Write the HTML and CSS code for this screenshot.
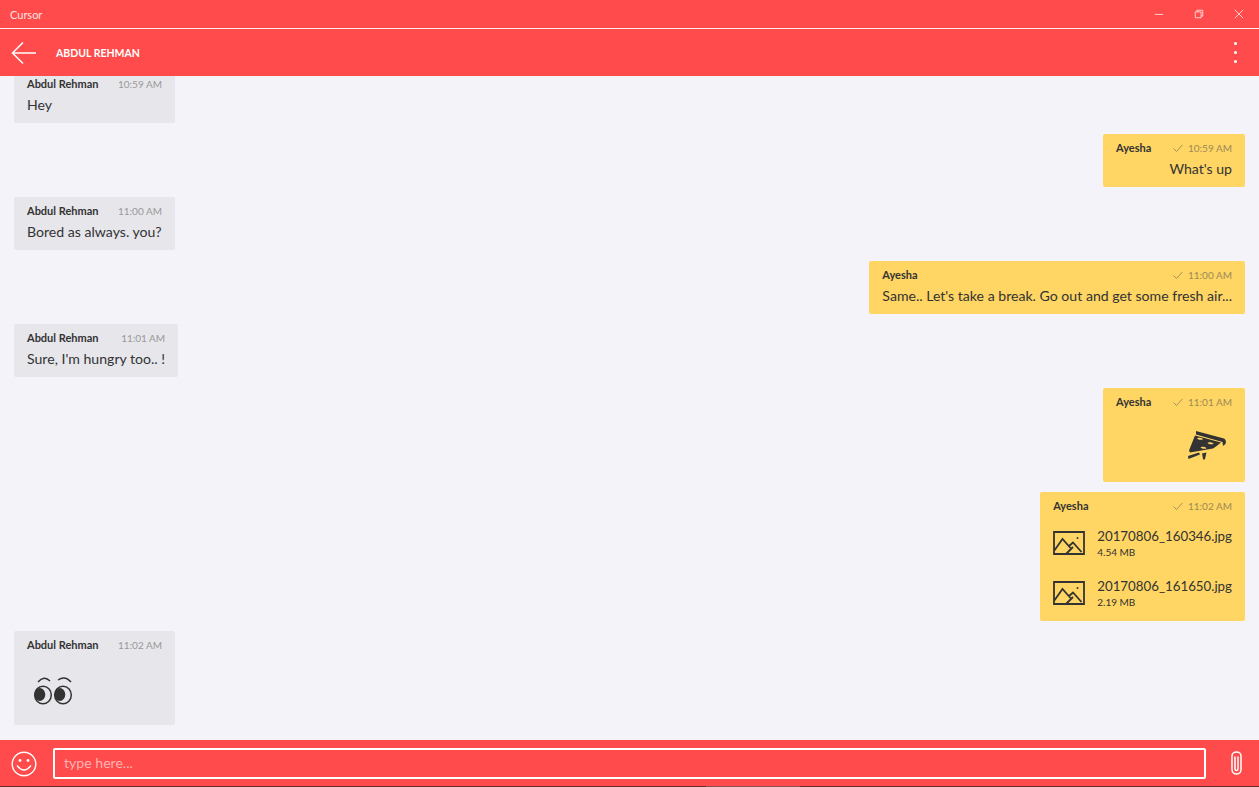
FILE: index.html
```html
<!DOCTYPE html>
<html lang="en">
<head>
  <meta charset="UTF-8">
  <title>Cursor</title>
  <link rel="stylesheet" href="styles.css">
</head>
<body>
  <div class="app">
    <div class="titlebar">
      <span class="app-name">Cursor</span>
      <div class="win-btns">
        <svg class="win-btn" viewBox="0 0 12 12"><path d="M1 6.5h10"/></svg>
        <svg class="win-btn" viewBox="0 0 12 12"><path d="M1.5 3.5h7v7h-7zM3.5 3.5v-2h7v7h-2"/></svg>
        <svg class="win-btn" viewBox="0 0 12 12"><path d="M1 1l10 10M11 1L1 11"/></svg>
      </div>
    </div>

    <header class="chat-header">
      <svg class="back-icon" viewBox="0 0 26 24"><path d="M25 12H1.5M12 1.5L1.5 12 12 22.5"/></svg>
      <span class="contact">ABDUL REHMAN</span>
      <div class="more"><i></i><i></i><i></i></div>
    </header>

    <main class="messages">
      <div class="msg in">
        <div class="msg-head"><b>Abdul Rehman</b><span class="time">10:59 AM</span></div>
        <div class="msg-text">Hey</div>
      </div>
      <div class="msg out">
        <div class="msg-head"><b>Ayesha</b><span class="time"><svg class="tick" viewBox="0 0 10 8"><path d="M.5 4.5L3.5 7.5 9.5.8"/></svg>10:59 AM</span></div>
        <div class="msg-text">What's up</div>
      </div>
      <div class="msg in">
        <div class="msg-head"><b>Abdul Rehman</b><span class="time">11:00 AM</span></div>
        <div class="msg-text">Bored as always. you?</div>
      </div>
      <div class="msg out">
        <div class="msg-head"><b>Ayesha</b><span class="time"><svg class="tick" viewBox="0 0 10 8"><path d="M.5 4.5L3.5 7.5 9.5.8"/></svg>11:00 AM</span></div>
        <div class="msg-text">Same.. Let's take a break. Go out and get some fresh air...</div>
      </div>
      <div class="msg in">
        <div class="msg-head"><b>Abdul Rehman</b><span class="time">11:01 AM</span></div>
        <div class="msg-text">Sure, I'm hungry too.. !</div>
      </div>
      <div class="msg out sticker-msg">
        <div class="msg-head"><b>Ayesha</b><span class="time"><svg class="tick" viewBox="0 0 10 8"><path d="M.5 4.5L3.5 7.5 9.5.8"/></svg>11:01 AM</span></div>
        <svg class="pizza" viewBox="0 0 40 30">
          <path class="fill" d="M9 0L37 7.500Q39.800 9 38.500 13L36 15 35.500 11 9 3.500z"/>
          <path class="fill" fill-rule="evenodd" d="M8 4.500L34 11.500 29 15.500 26 17.500 3 21.500 2 19.500zM10 7.500c1-1.500 5-.8 6 .5-1 1.500-5 .8-6-.5zM20.500 12c1-1.500 5-.8 6 .5-1 1.500-5 .8-6-.5zM13.500 16.500c1-1.500 5-.8 6 .5-1 1.500-5 .8-6-.5z"/>
          <path class="fill" d="M1 25L12 21.500 13 23.500 1.500 28zM15 22.500L19.500 21.500 18 28Q16.500 29.500 16 28z"/>
        </svg>
      </div>
      <div class="msg out files-msg">
        <div class="msg-head"><b>Ayesha</b><span class="time"><svg class="tick" viewBox="0 0 10 8"><path d="M.5 4.500L3.500 7.500 9.500.8"/></svg>11:02 AM</span></div>
        <div class="file">
          <svg class="file-icon" viewBox="0 0 32 24"><path d="M1 1h30v22H1zM1 20L9.500 8l8 9M16 15l4-3.500 8.500 9.500M13 23l7-7"/><circle class="fill" cx="24.500" cy="7" r="1"/></svg>
          <div class="file-info"><div class="file-name">20170806_160346.jpg</div><div class="file-size">4.54 MB</div></div>
        </div>
        <div class="file">
          <svg class="file-icon" viewBox="0 0 32 24"><path d="M1 1h30v22H1zM1 20L9.500 8l8 9M16 15l4-3.500 8.500 9.500M13 23l7-7"/><circle class="fill" cx="24.500" cy="7" r="1"/></svg>
          <div class="file-info"><div class="file-name">20170806_161650.jpg</div><div class="file-size">2.19 MB</div></div>
        </div>
      </div>
      <div class="msg in sticker-msg">
        <div class="msg-head"><b>Abdul Rehman</b><span class="time">11:02 AM</span></div>
        <svg class="eyes" viewBox="0 0 40 30">
          <ellipse class="eye" cx="10" cy="19" rx="8.300" ry="8.800"/>
          <ellipse class="eye" cx="30" cy="19" rx="8.300" ry="8.800"/>
          <ellipse class="fill" cx="6.800" cy="18.500" rx="5.500" ry="6.500"/>
          <ellipse class="fill" cx="26.800" cy="18.500" rx="5.500" ry="6.500"/>
          <path class="brow" d="M5 6Q11-1 17 5M25 4Q32-1 38 6"/>
        </svg>
      </div>
    </main>

    <footer class="composer">
      <svg class="smile" viewBox="0 0 26 26"><circle cx="13" cy="13" r="11.800"/><path d="M6 14.500Q13 23.500 20 14.500"/><circle class="dot" cx="9" cy="9.500" r="1.400"/><circle class="dot" cx="17" cy="9.500" r="1.400"/></svg>
      <div class="input">type here...</div>
      <svg class="clip" viewBox="0 0 11 24"><path d="M1 6V18.500a4.500 4.500 0 0 0 9 0V5a4.500 4 0 0 0-9 0v1M4 5.500V18a1.500 1.500 0 0 0 3 0V5.500"/></svg>
    </footer>
    <div class="bottom-edge"></div>
  </div>
</body>
</html>
```

FILE: styles.css
```css
html, body { margin: 0; height: 100%; }
body { font-family: Lato, "Open Sans", Arial, sans-serif; color: #333; background: #f3f3f9; overflow: hidden; }
.app { height: 787px; display: flex; flex-direction: column; }

.titlebar { height: 28px; flex: none; background: #ff4b4b; border-bottom: 1px solid #ffe9e9; display: flex; align-items: center; justify-content: space-between; color: #ffe3e3; }
.app-name { font-size: 11px; margin-left: 10px; }
.win-btns { display: flex; gap: 30px; margin-right: 15px; }
.win-btn { width: 10px; height: 10px; fill: none; stroke: #ffdcdc; stroke-width: 1.1; }

.chat-header { height: 47px; flex: none; background: #ff4b4b; display: flex; align-items: center; }
.back-icon { width: 26px; height: 24px; margin-left: 11px; fill: none; stroke: #fff; stroke-width: 1.5; }
.contact { margin-left: 19px; font-size: 10.500px; font-weight: 700; color: #fff; }
.more { margin-left: auto; margin-right: 22px; display: flex; flex-direction: column; gap: 6px; }
.more i { width: 3px; height: 3px; border-radius: 50%; background: #fff; }

.messages { flex: 1; min-height: 0; overflow: hidden; display: flex; flex-direction: column; justify-content: flex-end; gap: 10.5px; padding: 0 14px 15px; }
.msg { flex: none; box-sizing: border-box; padding: 6px 13px 8px; border-radius: 2px; min-height: 53px; }
.msg.in { align-self: flex-start; background: #e6e6eb; min-width: 161px; }
.msg.out { align-self: flex-end; background: #ffd563; min-width: 142px; }
.msg-head { display: flex; justify-content: space-between; align-items: center; gap: 18px; font-size: 11px; line-height: 16px; }
.msg-head b { font-weight: 700; }
.time { color: #999; display: flex; align-items: center; font-size: 10px; }
.msg.out .time { color: #9c8b58; }
.tick { width: 10px; height: 8px; margin-right: 5px; fill: none; stroke: #9c8b58; stroke-width: .9; }
.msg-text { font-size: 14.100px; line-height: 20px; margin-top: 3px; }
.msg.out .msg-text { text-align: right; }

.sticker-msg { height: 94px; }
.pizza { display: block; width: 40px; height: 30px; margin: 21px 5px 0 auto; }
.eyes { display: block; width: 40px; height: 30px; margin: 23px 0 0 6px; }
.fill { fill: #333; }
.eye { fill: none; stroke: #333; stroke-width: 1.500; }
.brow { fill: none; stroke: #333; stroke-width: 1.500; }

.files-msg { padding-bottom: 6.500px; }
.file { display: flex; align-items: center; gap: 12px; margin-top: 7px; height: 43px; }
.file-icon { width: 32px; height: 24px; fill: none; stroke: #333; stroke-width: 1.800; }
.file-icon .fill { stroke: none; }
.file-name { font-size: 13.300px; line-height: 19px; padding-top: 1px; }
.file-size { font-size: 10px; line-height: 13px; }

.composer { height: 46px; flex: none; box-sizing: border-box; background: #ff4b4b; display: flex; align-items: center; }
.smile { width: 26px; height: 26px; margin: 2px 0 0 11px; fill: none; stroke: #fff; stroke-width: 1.400; }
.smile .dot { fill: #fff; stroke: none; }
.input { box-sizing: border-box; width: 1153px; height: 31px; margin-left: 16px; border: 2px solid #fff; border-radius: 2px; padding-left: 9px; font-size: 14.100px; line-height: 26px; color: #ffb3b3; }
.clip { width: 11px; height: 24px; margin-left: 25px; fill: none; stroke: #fff; stroke-width: 1.500; }
.bottom-edge { height: 1px; flex: none; background: linear-gradient(to right, #6a2a2a 706px, #8a5050 706px, #8a5050 800px, #6a2a2a 800px); }
```
